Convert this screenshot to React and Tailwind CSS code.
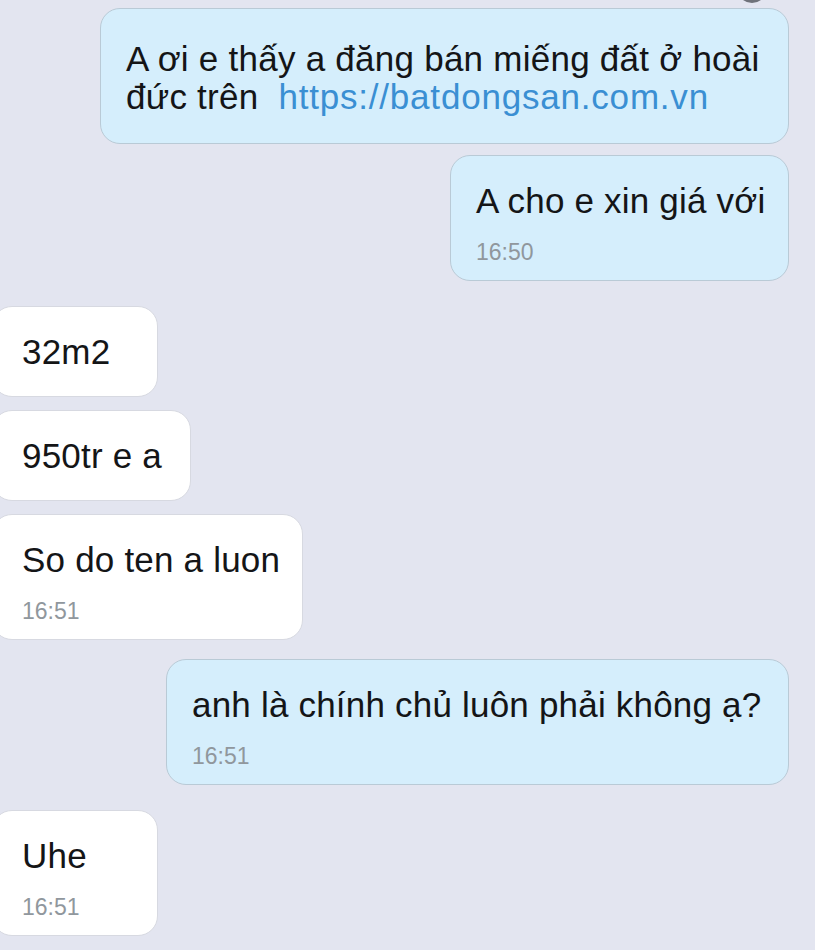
const font = { fontFamily: '"Liberation Sans", Arial, sans-serif' };

function Bubble({ mine, width, time, className = "", children }) {
  return (
    <div
      className={`${mine ? "self-end mr-[26px] bg-[#d5eefc] border-[#b9cad6] pl-[25px]" : "self-start -ml-[8px] bg-white border-[#d7d9e1] pl-[29px]"} ${time ? "pt-[25px] pb-[13px]" : "pt-[25px] pb-[24px]"} border rounded-[20px] pr-[20px] ${className}`}
      style={{ width }}
    >
      <div className="text-[35px] leading-[40px] tracking-[0.2px] text-[#141517] whitespace-nowrap">{children}</div>
      {time && <div className="mt-[16px] text-[23px] leading-[30px] text-[#90979d]">{time}</div>}
    </div>
  );
}

export default function App() {
  return (
    <div className="relative w-[815px] h-[950px] overflow-hidden bg-[#e3e5f0]" style={font}>
      {/* bottom of something cut off above */}
      <div className="absolute left-[737px] top-[-27px] w-[30px] h-[30px] rounded-full bg-[#6f727a]" />

      <div className="flex flex-col pt-[8px]">
        <div className="self-end mr-[26px] w-[689px] bg-[#d5eefc] border border-[#b9cad6] rounded-[20px] pl-[25px] pr-[15px] pt-[31px] pb-[27px]">
          <p className="text-[35px] leading-[38px] tracking-[0.25px] text-[#141517] whitespace-nowrap">
            A ơi e thấy a đăng bán miếng đất ở hoài
            <br />
            đức trên&nbsp; <span className="text-[#3a8fd3] tracking-[0.8px]">https://batdongsan.com.vn</span>
          </p>
        </div>

        <Bubble mine width={339} time="16:50" className="mt-[11px]">
          A cho e xin giá với
        </Bubble>

        <Bubble width={166} className="mt-[25px]">
          32m2
        </Bubble>

        <Bubble width={199} className="mt-[13px]">
          950tr e a
        </Bubble>

        <Bubble width={311} time="16:51" className="mt-[13px]">
          So do ten a luon
        </Bubble>

        <Bubble mine width={623} time="16:51" className="mt-[19px]">
          anh là chính chủ luôn phải không ạ?
        </Bubble>

        <Bubble width={166} time="16:51" className="mt-[25px]">
          Uhe
        </Bubble>
      </div>
    </div>
  );
}
